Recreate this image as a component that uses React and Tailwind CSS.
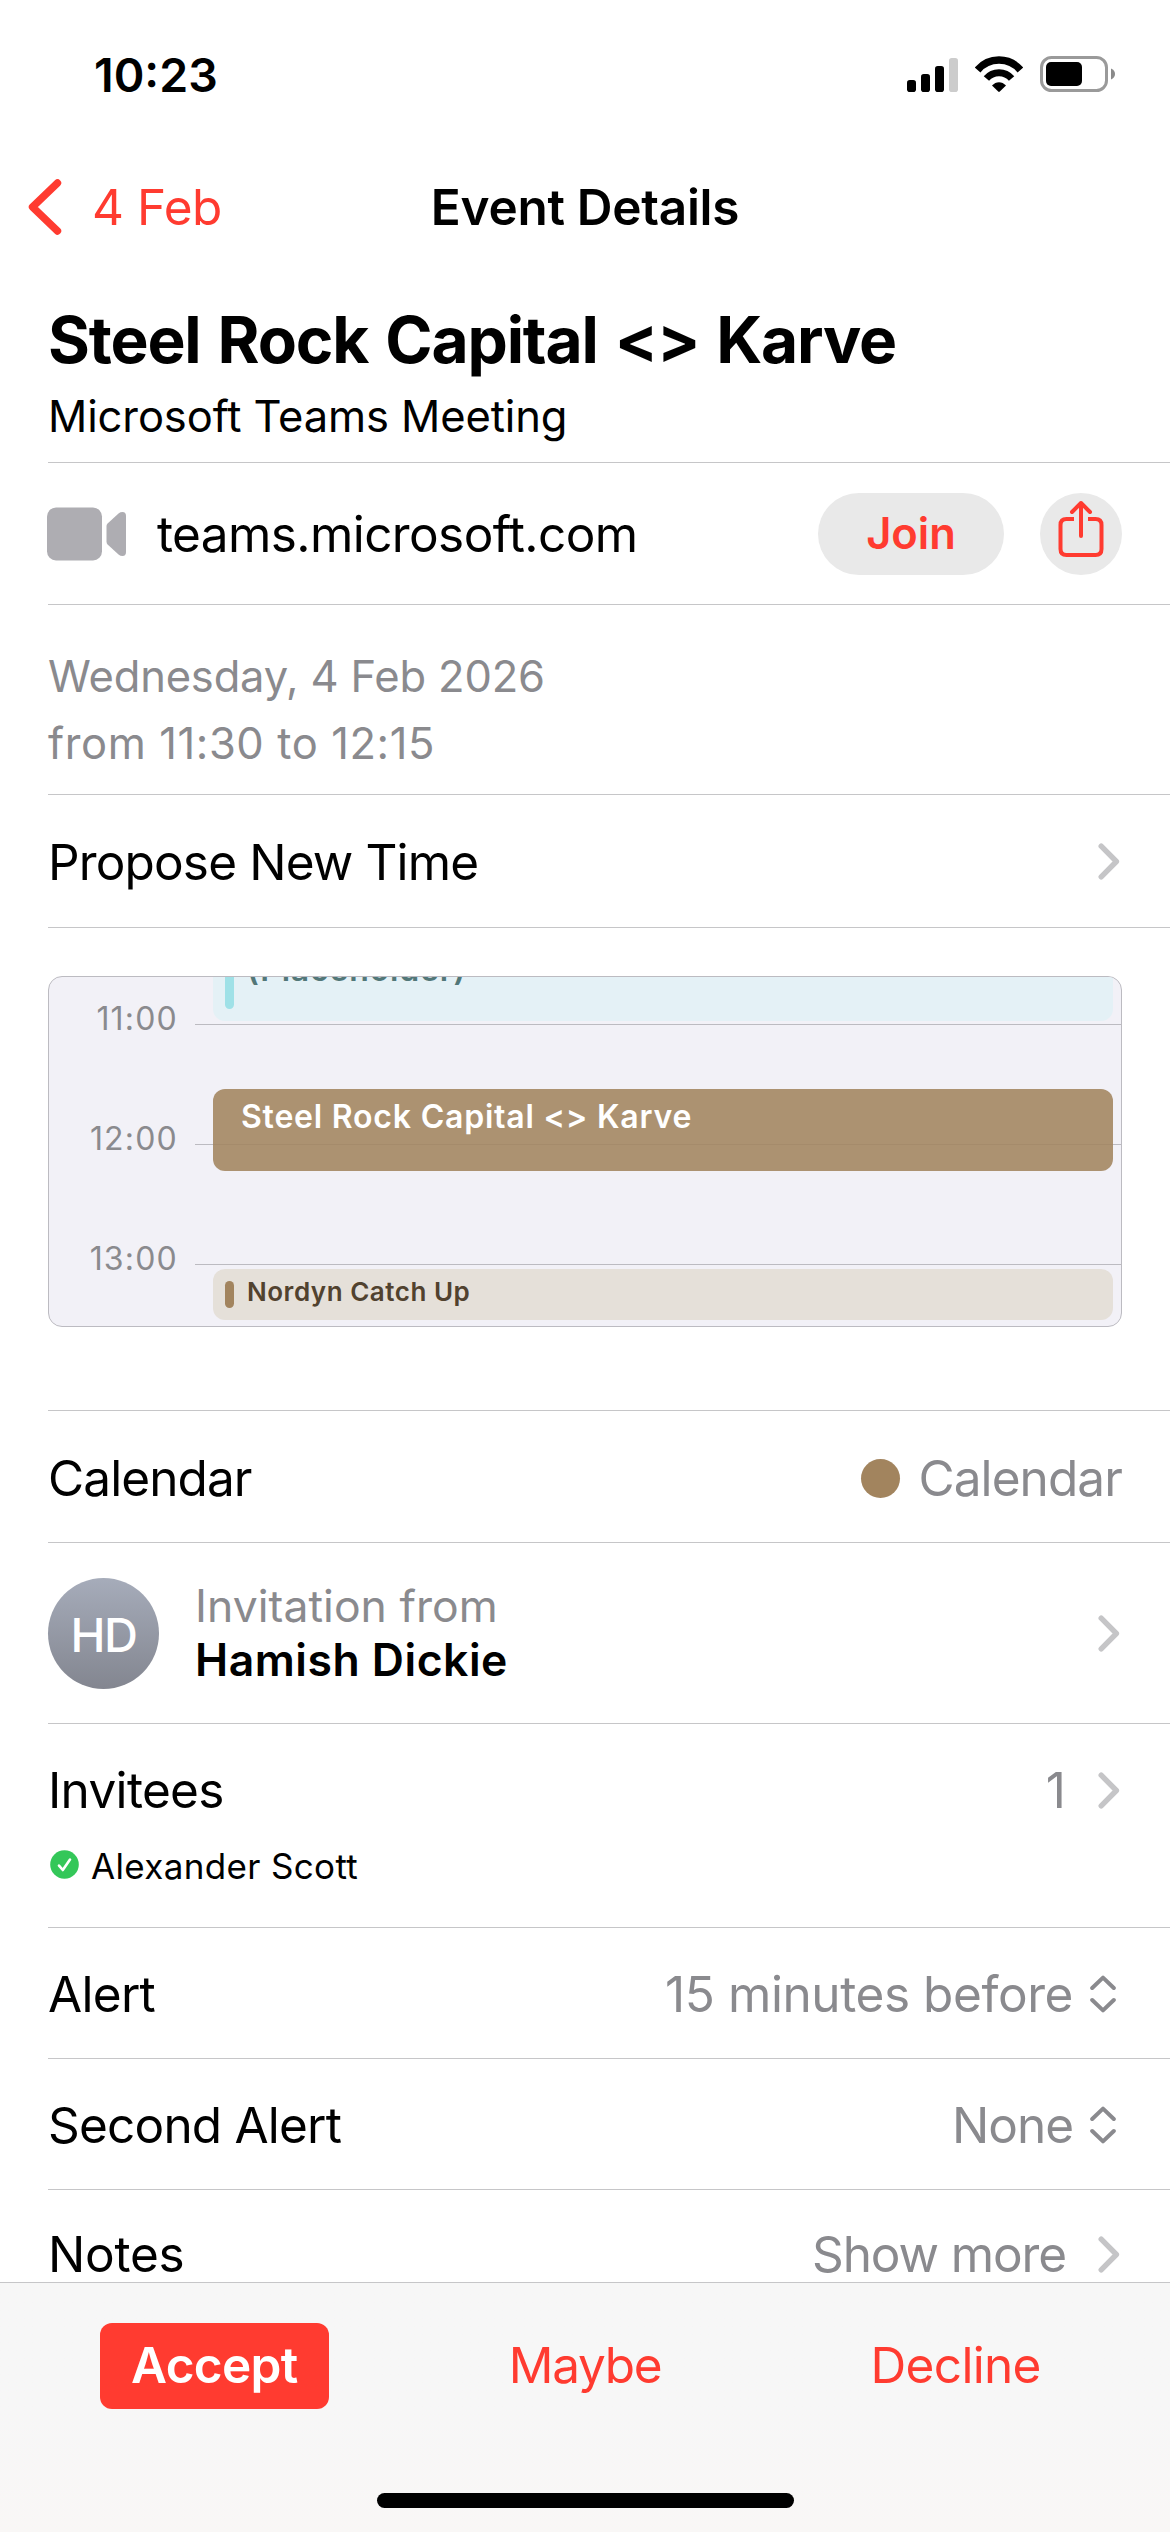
import clsx from 'clsx';

const hours = ['11:00', '12:00', '13:00'];

const alerts = [
  { label: 'Alert', value: '15 minutes before', labelClass: 'tracking-[-0.7px]', valueClass: 'tracking-[-0.42px]' },
  { label: 'Second Alert', value: 'None', labelClass: 'tracking-[-0.8px]', valueClass: 'tracking-[-1px]' },
];

function SignalIcon() {
  return (
    <svg width="51" height="36" viewBox="0 0 51 36">
      <rect x="0" y="24" width="9" height="12" rx="2.8" />
      <rect x="14" y="18" width="9" height="18" rx="2.8" />
      <rect x="28" y="10" width="9" height="26" rx="2.8" />
      <rect x="42" y="2" width="9" height="34" rx="2.8" fill="#cccccc" />
    </svg>
  );
}

function WifiIcon() {
  return (
    <svg width="48" height="36" viewBox="0 0 48 36" fill="none">
      <path d="M2.6 14A28 28 0 0 1 45.4 14" stroke="#000" strokeWidth="7.4" />
      <path d="M11.4 22.6A16.5 16.5 0 0 1 36.6 22.6" stroke="#000" strokeWidth="7" />
      <path d="M17 29.6C21 25 27 25 31 29.6L24.8 35.6Q24 36.3 23.2 35.6Z" fill="#000" />
    </svg>
  );
}

function BatteryIcon() {
  return (
    <svg width="75" height="36" viewBox="0 0 75 36" fill="none">
      <rect x="1.5" y="1.5" width="65" height="33" rx="10" stroke="#9a9a9a" strokeWidth="3" />
      <rect x="6" y="6" width="36" height="24" rx="5" fill="#000" />
      <path d="M71 12.5C73.6 13.5 75 15.6 75 18S73.6 22.5 71 23.5Z" fill="#8a8a8a" />
    </svg>
  );
}

function BackIcon() {
  return (
    <svg width="34" height="58" viewBox="0 0 34 58" fill="none">
      <path d="M29.5 5L4.5 29L29.5 53" stroke="#ff3b30" strokeWidth="7.4" strokeLinecap="round" strokeLinejoin="round" />
    </svg>
  );
}

function VideoIcon() {
  return (
    <svg width="80" height="54" viewBox="0 0 80 54" fill="#aeadb2">
      <rect x="0" y="0.5" width="55" height="53" rx="9" />
      <path d="M59.5 19Q59.5 17.5 60.6 16.4L71.5 6.4Q73.4 5 75.5 5Q79 5 79 9V45Q79 49 75.5 49Q73.4 49 71.5 47.4L60.6 37.4Q59.5 36.3 59.5 34.8Z" />
    </svg>
  );
}

function ShareIcon() {
  return (
    <svg
      width="46"
      height="58"
      viewBox="0 0 46 58"
      fill="none"
      stroke="#ff3b30"
      strokeWidth="4"
      strokeLinecap="round"
      strokeLinejoin="round"
      className="mb-2.5"
    >
      <path d="M16 19H8.5Q2.5 19 2.5 25V49Q2.5 55 8.5 55H37.5Q43.5 55 43.5 49V25Q43.5 19 37.5 19H30" strokeLinecap="butt" />
      <path d="M23 3.5V36" />
      <path d="M14 12L23 3L32 12" />
    </svg>
  );
}

function Chevron() {
  return (
    <svg width="22" height="37" viewBox="0 0 22 37" fill="none" className="mr-0.5 shrink-0">
      <path d="M3.2 3.2L18.4 18.5L3.2 33.8" stroke="#c5c5c7" strokeWidth="5.4" strokeLinecap="round" strokeLinejoin="round" />
    </svg>
  );
}

function UpDownIcon() {
  return (
    <svg
      width="26"
      height="38"
      viewBox="0 0 26 38"
      fill="none"
      stroke="#8a8a8e"
      strokeWidth="4"
      strokeLinecap="round"
      strokeLinejoin="round"
      className="mr-1.5"
    >
      <path d="M2.2 13L13 2.6L23.8 13" />
      <path d="M2.2 25L13 35.4L23.8 25" />
    </svg>
  );
}

function CheckBadge() {
  return (
    <svg width="29" height="29" viewBox="0 0 29 29" fill="none" className="mb-[3px] ml-0.5">
      <circle cx="14.5" cy="14.5" r="14.3" fill="#34c759" />
      <path d="M9 15.6L12.8 20L20 9.6" stroke="#fff" strokeWidth="2.6" strokeLinecap="round" strokeLinejoin="round" />
    </svg>
  );
}

// Row with a separator that runs to the right edge of the screen
function Row({ className, children }) {
  return (
    <div className="pl-12">
      <div className={clsx('border-b border-[#c6c6c8] pr-12', className)}>{children}</div>
    </div>
  );
}

function StatusBar() {
  return (
    <div className="flex h-[149px] shrink-0 items-center justify-between pl-[94px] pr-[55px]">
      <span className="text-[46.5px] font-semibold">10:23</span>
      <div className="flex items-center gap-[17px] pb-0.5">
        <SignalIcon />
        <WifiIcon />
        <BatteryIcon />
      </div>
    </div>
  );
}

function NavBar() {
  return (
    <div className="grid h-[116px] shrink-0 grid-cols-[1fr_auto_1fr] items-center">
      <button className="flex items-center gap-[30px] pl-7 text-[#ff3b30] tracking-[-0.5px]">
        <BackIcon />
        4 Feb
      </button>
      <h1 className="font-semibold tracking-[-0.27px]">Event Details</h1>
      <span />
    </div>
  );
}

function DayPreview() {
  return (
    <div className="relative h-[351px] overflow-hidden rounded-[14px] border border-[#bcbbc1] bg-[#f2f1f7] pt-[27px]">
      {hours.map((hour) => (
        <div key={hour} className="flex h-[120px] items-start">
          <span className="w-[129px] pt-px text-right text-[32px] leading-7 tracking-[1.2px] text-[#8a8a8e]">{hour}</span>
          <div className="ml-[17px] mt-5 h-px flex-1 bg-[#bcbbc1]" />
        </div>
      ))}

      {/* events lie over the hour lines */}
      <div className="absolute left-[164px] right-2 top-[-76px] flex h-[120px] items-end rounded-xl bg-[#e4f1f6] pl-3">
        <div className="mb-3 h-24 w-[9px] rounded-full bg-[#9fe1e7]" />
        <span className="mb-[31px] ml-[13px] text-[32px] font-semibold leading-10 tracking-[0.84px] text-[#527778]">
          (Placeholder)
        </span>
      </div>
      <div className="absolute left-[164px] right-2 top-28 h-[82px] rounded-xl bg-[#a2845e]/88 pl-7 pt-2 text-[32px] font-semibold leading-10 tracking-[0.79px] text-white">
        Steel Rock Capital &lt;&gt; Karve
      </div>
      <div className="absolute left-[164px] right-2 top-[292px] flex h-[51px] items-start rounded-xl bg-[#e5e0d9] pl-3">
        <div className="mt-3 h-[27px] w-[9px] rounded-full bg-[#a2845e]" />
        <span className="ml-[13px] mt-[5px] text-[26px] font-semibold leading-9 tracking-[0.52px] text-[#51422f]">
          Nordyn Catch Up
        </span>
      </div>
    </div>
  );
}

function ActionBar() {
  return (
    <div className="flex h-[250px] shrink-0 flex-col items-center border-t border-[#c6c6c8] bg-linear-to-b from-[#f7f7f7] from-50% to-[#f9f7f6] pt-10">
      <div className="grid w-full grid-cols-3 justify-items-center px-[29px] text-[#ff3b30]">
        <button className="h-[86px] w-[229px] rounded-xl bg-[#ff3b30] pb-0.5 font-semibold tracking-[-0.68px] text-white">
          Accept
        </button>
        <button className="h-[86px] pb-0.5 tracking-[-1.3px]">Maybe</button>
        <button className="h-[86px] pb-0.5 tracking-[-0.68px]">Decline</button>
      </div>
      <div className="mt-[84px] h-[15px] w-[417px] rounded-full bg-black" />
    </div>
  );
}

export default function App() {
  return (
    <div className="flex h-[2532px] w-[1170px] flex-col overflow-hidden bg-white font-['Inter',sans-serif] text-[49.5px] leading-[60px] text-black">
      <StatusBar />
      <NavBar />

      <Row className="h-[198px] pt-[35px]">
        <h2 className="text-[64px] font-bold leading-[80px] tracking-[-1.15px] [word-spacing:3px]">
          Steel Rock Capital &lt;&gt; Karve
        </h2>
        <p className="text-[43.5px] leading-[72px] tracking-[-0.11px]">Microsoft Teams Meeting</p>
      </Row>

      <Row className="flex h-[142px] items-center pt-px">
        <div className="-ml-px">
          <VideoIcon />
        </div>
        <span className="ml-[30px] tracking-[-0.6px]">teams.microsoft.com</span>
        <button className="ml-auto h-[82px] w-[186px] rounded-full bg-[#e9e9e9] pb-0.5 text-[43.5px] font-semibold text-[#ff3b30]">
          Join
        </button>
        <button className="ml-9 flex size-[82px] items-center justify-center rounded-full bg-[#e9e9e9]">
          <ShareIcon />
        </button>
      </Row>

      <Row className="h-[190px] pt-[38px] text-[43.5px] leading-[67px] text-[#8a8a8e]">
        <p className="tracking-[-0.17px]">Wednesday, 4 Feb 2026</p>
        <p className="tracking-[0.6px]">from 11:30 to 12:15</p>
      </Row>

      <Row className="flex h-[133px] items-center justify-between pt-px">
        <span className="tracking-[-0.85px]">Propose New Time</span>
        <Chevron />
      </Row>

      <Row className="h-[483px] pt-12">
        <DayPreview />
      </Row>

      <Row className="flex h-[132px] items-center justify-between pt-[3px] tracking-[-0.9px]">
        <span>Calendar</span>
        <div className="flex items-center gap-[18px] text-[#8a8a8e]">
          <span className="size-[39px] rounded-full bg-[#a2845e]" />
          Calendar
        </div>
      </Row>

      <Row className="flex h-[181px] items-center">
        <div className="flex size-[111px] items-center justify-center rounded-full bg-linear-to-b from-[#a6acba] to-[#838690] pt-[3px] text-[47px] font-medium tracking-[-1.5px] text-white">
          HD
        </div>
        <div className="ml-9 flex-1 text-[44.5px] leading-[54px]">
          <p className="tracking-[0.05px] text-[#8a8a8e]">Invitation from</p>
          <p className="font-semibold tracking-[0.5px]">Hamish Dickie</p>
        </div>
        <Chevron />
      </Row>

      <Row className="h-[204px] pt-9">
        <div className="flex items-center">
          <span className="flex-1 tracking-[-0.68px]">Invitees</span>
          <span className="mr-8 text-[#8a8a8e]">1</span>
          <Chevron />
        </div>
        <div className="mt-[26px] flex h-10 items-center gap-3 text-[35px] tracking-[0.34px]">
          <CheckBadge />
          Alexander Scott
        </div>
      </Row>

      {alerts.map((alert) => (
        <Row key={alert.label} className="flex h-[131px] items-center justify-between pt-0.5">
          <span className={alert.labelClass}>{alert.label}</span>
          <div className="flex items-center gap-[17px] text-[#8a8a8e]">
            <span className={alert.valueClass}>{alert.value}</span>
            <UpDownIcon />
          </div>
        </Row>
      ))}

      <div className="flex h-[92px] items-start px-12 pt-9 leading-[56px]">
        <span className="flex-1 tracking-[-0.24px]">Notes</span>
        <div className="flex items-center gap-8 text-[#8a8a8e]">
          <span className="tracking-[-1.11px]">Show more</span>
          <Chevron />
        </div>
      </div>

      <ActionBar />
    </div>
  );
}
